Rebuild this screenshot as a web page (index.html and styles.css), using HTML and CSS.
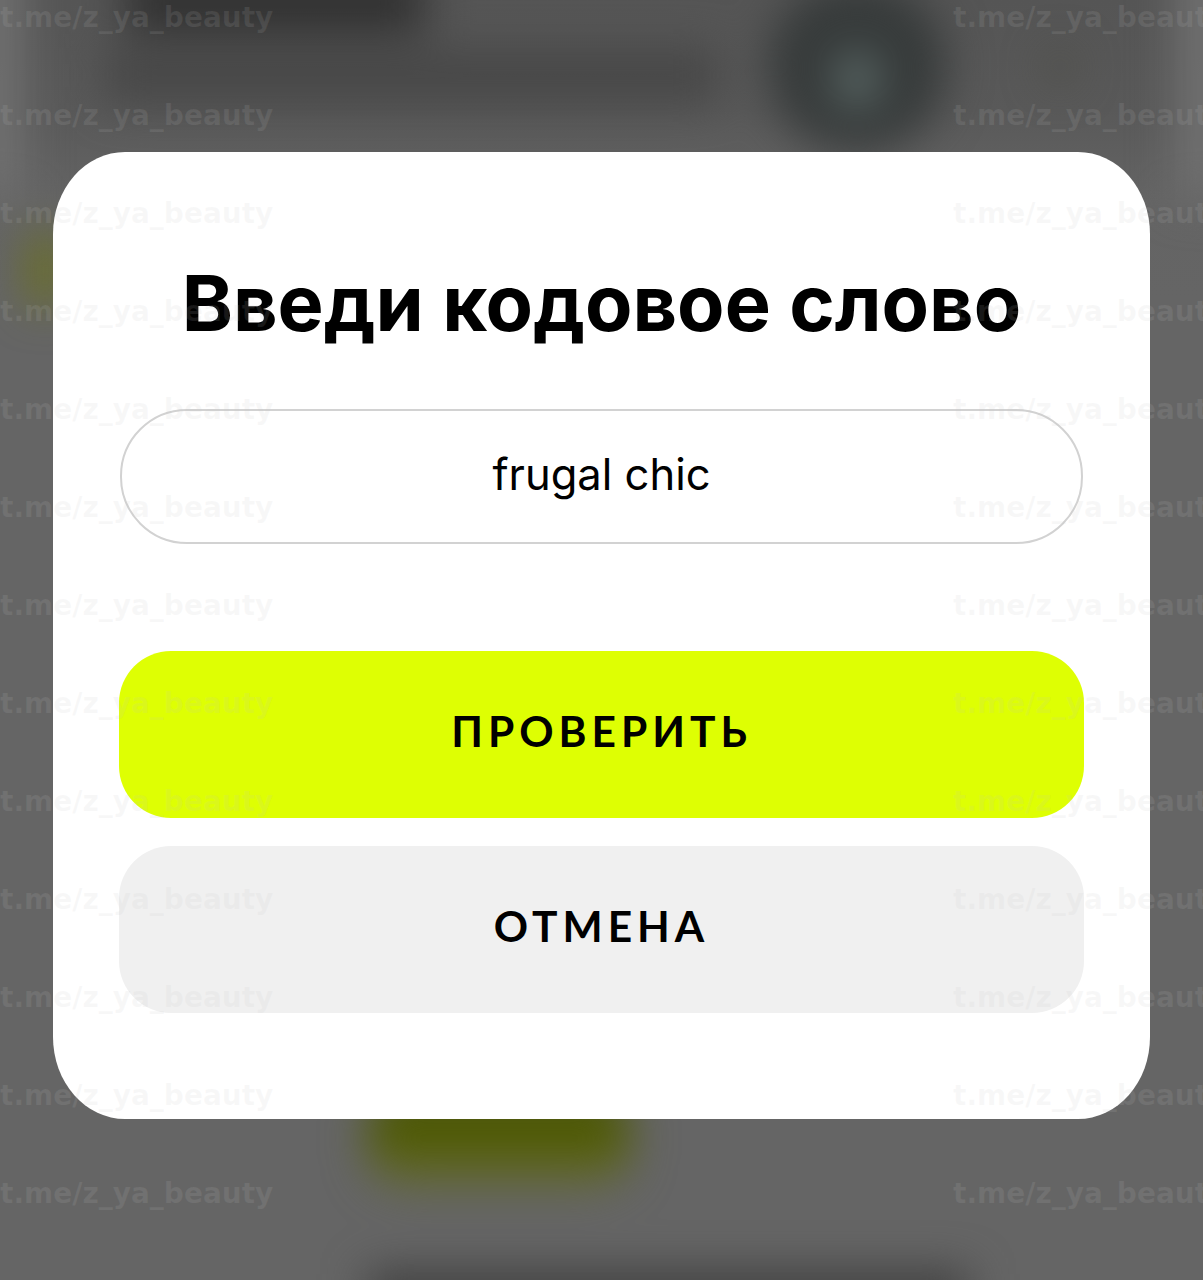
FILE: index.html
```html
<!DOCTYPE html>
<html lang="en">
<head>
    <meta charset="UTF-8">
    <meta name="viewport" content="width=device-width, initial-scale=1.0">
    <title>Кодовое слово</title>
    <link rel="stylesheet" href="styles.css">
</head>
<body>
    <div class="screen">
        <!-- blurred page behind the dialog -->
        <div class="backdrop">
            <div class="blob blob-edge-l"></div>
            <div class="blob blob-edge-r"></div>
            <div class="blob blob-head"></div>
            <div class="blob blob-line"></div>
            <div class="blob blob-avatar"></div>
            <div class="blob blob-avatar-core"></div>
            <div class="blob blob-dot"></div>
            <div class="blob blob-side"></div>
            <div class="blob blob-lime"></div>
            <div class="blob blob-foot"></div>
        </div>

        <div class="dialog">
            <h1 class="dialog-title">Введи кодовое слово</h1>
            <div class="code-field">frugal chic</div>
            <div class="actions">
                <button class="btn check">ПРОВЕРИТЬ</button>
                <button class="btn cancel">ОТМЕНА</button>
            </div>
        </div>

        <div class="watermarks">
            <span>t.me/z_ya_beauty</span><span>t.me/z_ya_beauty</span>
            <span>t.me/z_ya_beauty</span><span>t.me/z_ya_beauty</span>
            <span>t.me/z_ya_beauty</span><span>t.me/z_ya_beauty</span>
            <span>t.me/z_ya_beauty</span><span>t.me/z_ya_beauty</span>
            <span>t.me/z_ya_beauty</span><span>t.me/z_ya_beauty</span>
            <span>t.me/z_ya_beauty</span><span>t.me/z_ya_beauty</span>
            <span>t.me/z_ya_beauty</span><span>t.me/z_ya_beauty</span>
            <span>t.me/z_ya_beauty</span><span>t.me/z_ya_beauty</span>
            <span>t.me/z_ya_beauty</span><span>t.me/z_ya_beauty</span>
            <span>t.me/z_ya_beauty</span><span>t.me/z_ya_beauty</span>
            <span>t.me/z_ya_beauty</span><span>t.me/z_ya_beauty</span>
            <span>t.me/z_ya_beauty</span><span>t.me/z_ya_beauty</span>
            <span>t.me/z_ya_beauty</span><span>t.me/z_ya_beauty</span>
        </div>
    </div>
</body>
</html>
```

FILE: styles.css
```css
html, body {
    margin: 0;
    padding: 0;
}
body {
    background: #666;
    font-family: 'Inter', 'Liberation Sans', sans-serif;
    color: #000;
}
.screen {
    position: relative;
    height: 1280px;
    overflow: hidden;
    padding-top: 152px;
    box-sizing: border-box;
    background: linear-gradient(180deg, #555 0, #595959 110px, #646464 200px, #656565 300px);
}
.backdrop {
    position: absolute;
    inset: -60px;
    filter: blur(22px);
}
.blob {
    position: absolute;
}
.blob-edge-l { left: 0; top: 0; width: 85px; height: 260px; background: #6f6f6f; }
.blob-edge-r { left: 1235px; top: 0; width: 85px; height: 260px; background: #6f6f6f; }
.blob-head { left: 185px; top: 30px; width: 300px; height: 62px; background: #303030; }
.blob-line { left: 165px; top: 108px; width: 615px; height: 55px; background: #474747; }
.blob-avatar { left: 828px; top: 40px; width: 178px; height: 172px; border-radius: 50%; background: #363a3a; }
.blob-avatar-core { left: 895px; top: 110px; width: 44px; height: 60px; border-radius: 50%; background: #5c6a68; }
.blob-dot { left: 1108px; top: 110px; width: 24px; height: 34px; border-radius: 50%; background: #4a4a42; }
.blob-side { left: 90px; top: 295px; width: 30px; height: 70px; background: #6c7218; }
.blob-lime { left: 428px; top: 1150px; width: 262px; height: 96px; border-radius: 36px; background: linear-gradient(180deg, #465200 0, #4f5a00 45%, #676b3c 100%); }
.blob-foot { left: 428px; top: 1332px; width: 600px; height: 40px; background: #3d3d3d; }

.dialog {
    position: relative;
    box-sizing: border-box;
    width: 1097px;
    height: 967px;
    margin-left: 53px;
    padding: 110px 66px 0;
    background: #fff;
    border-radius: 72px / 82px;
}
.dialog-title {
    margin: 0;
    font-size: 77.5px;
    line-height: 82px;
    font-weight: 700;
    text-align: center;
    white-space: nowrap;
}
.code-field {
    margin: 65px 1px 0;
    height: 135px;
    box-sizing: border-box;
    border: 2.5px solid #d2d2d2;
    border-radius: 67px;
    font-size: 43.5px;
    line-height: 127px;
    text-align: center;
}
.actions {
    display: flex;
    flex-direction: column;
    gap: 28px;
    margin-top: 107px;
}
.btn {
    height: 167px;
    padding: 0 0 8px;
    border: none;
    border-radius: 52px;
    font-family: 'Lato', 'Liberation Sans', sans-serif;
    font-size: 42.5px;
    font-weight: 700;
    letter-spacing: 5px;
    color: #000;
    cursor: pointer;
}
.check { background: #deff03; }
.cancel { background: #f0f0f0; }

.watermarks {
    position: absolute;
    left: 0;
    top: -32px;
    width: 100%;
    display: grid;
    grid-template-columns: 953px 1fr;
    grid-auto-rows: 98px;
    align-items: center;
    font-family: 'DejaVu Sans', sans-serif;
    font-size: 28px;
    font-weight: 700;
    white-space: nowrap;
    color: rgba(197, 197, 197, 0.12);
    pointer-events: none;
}
```
